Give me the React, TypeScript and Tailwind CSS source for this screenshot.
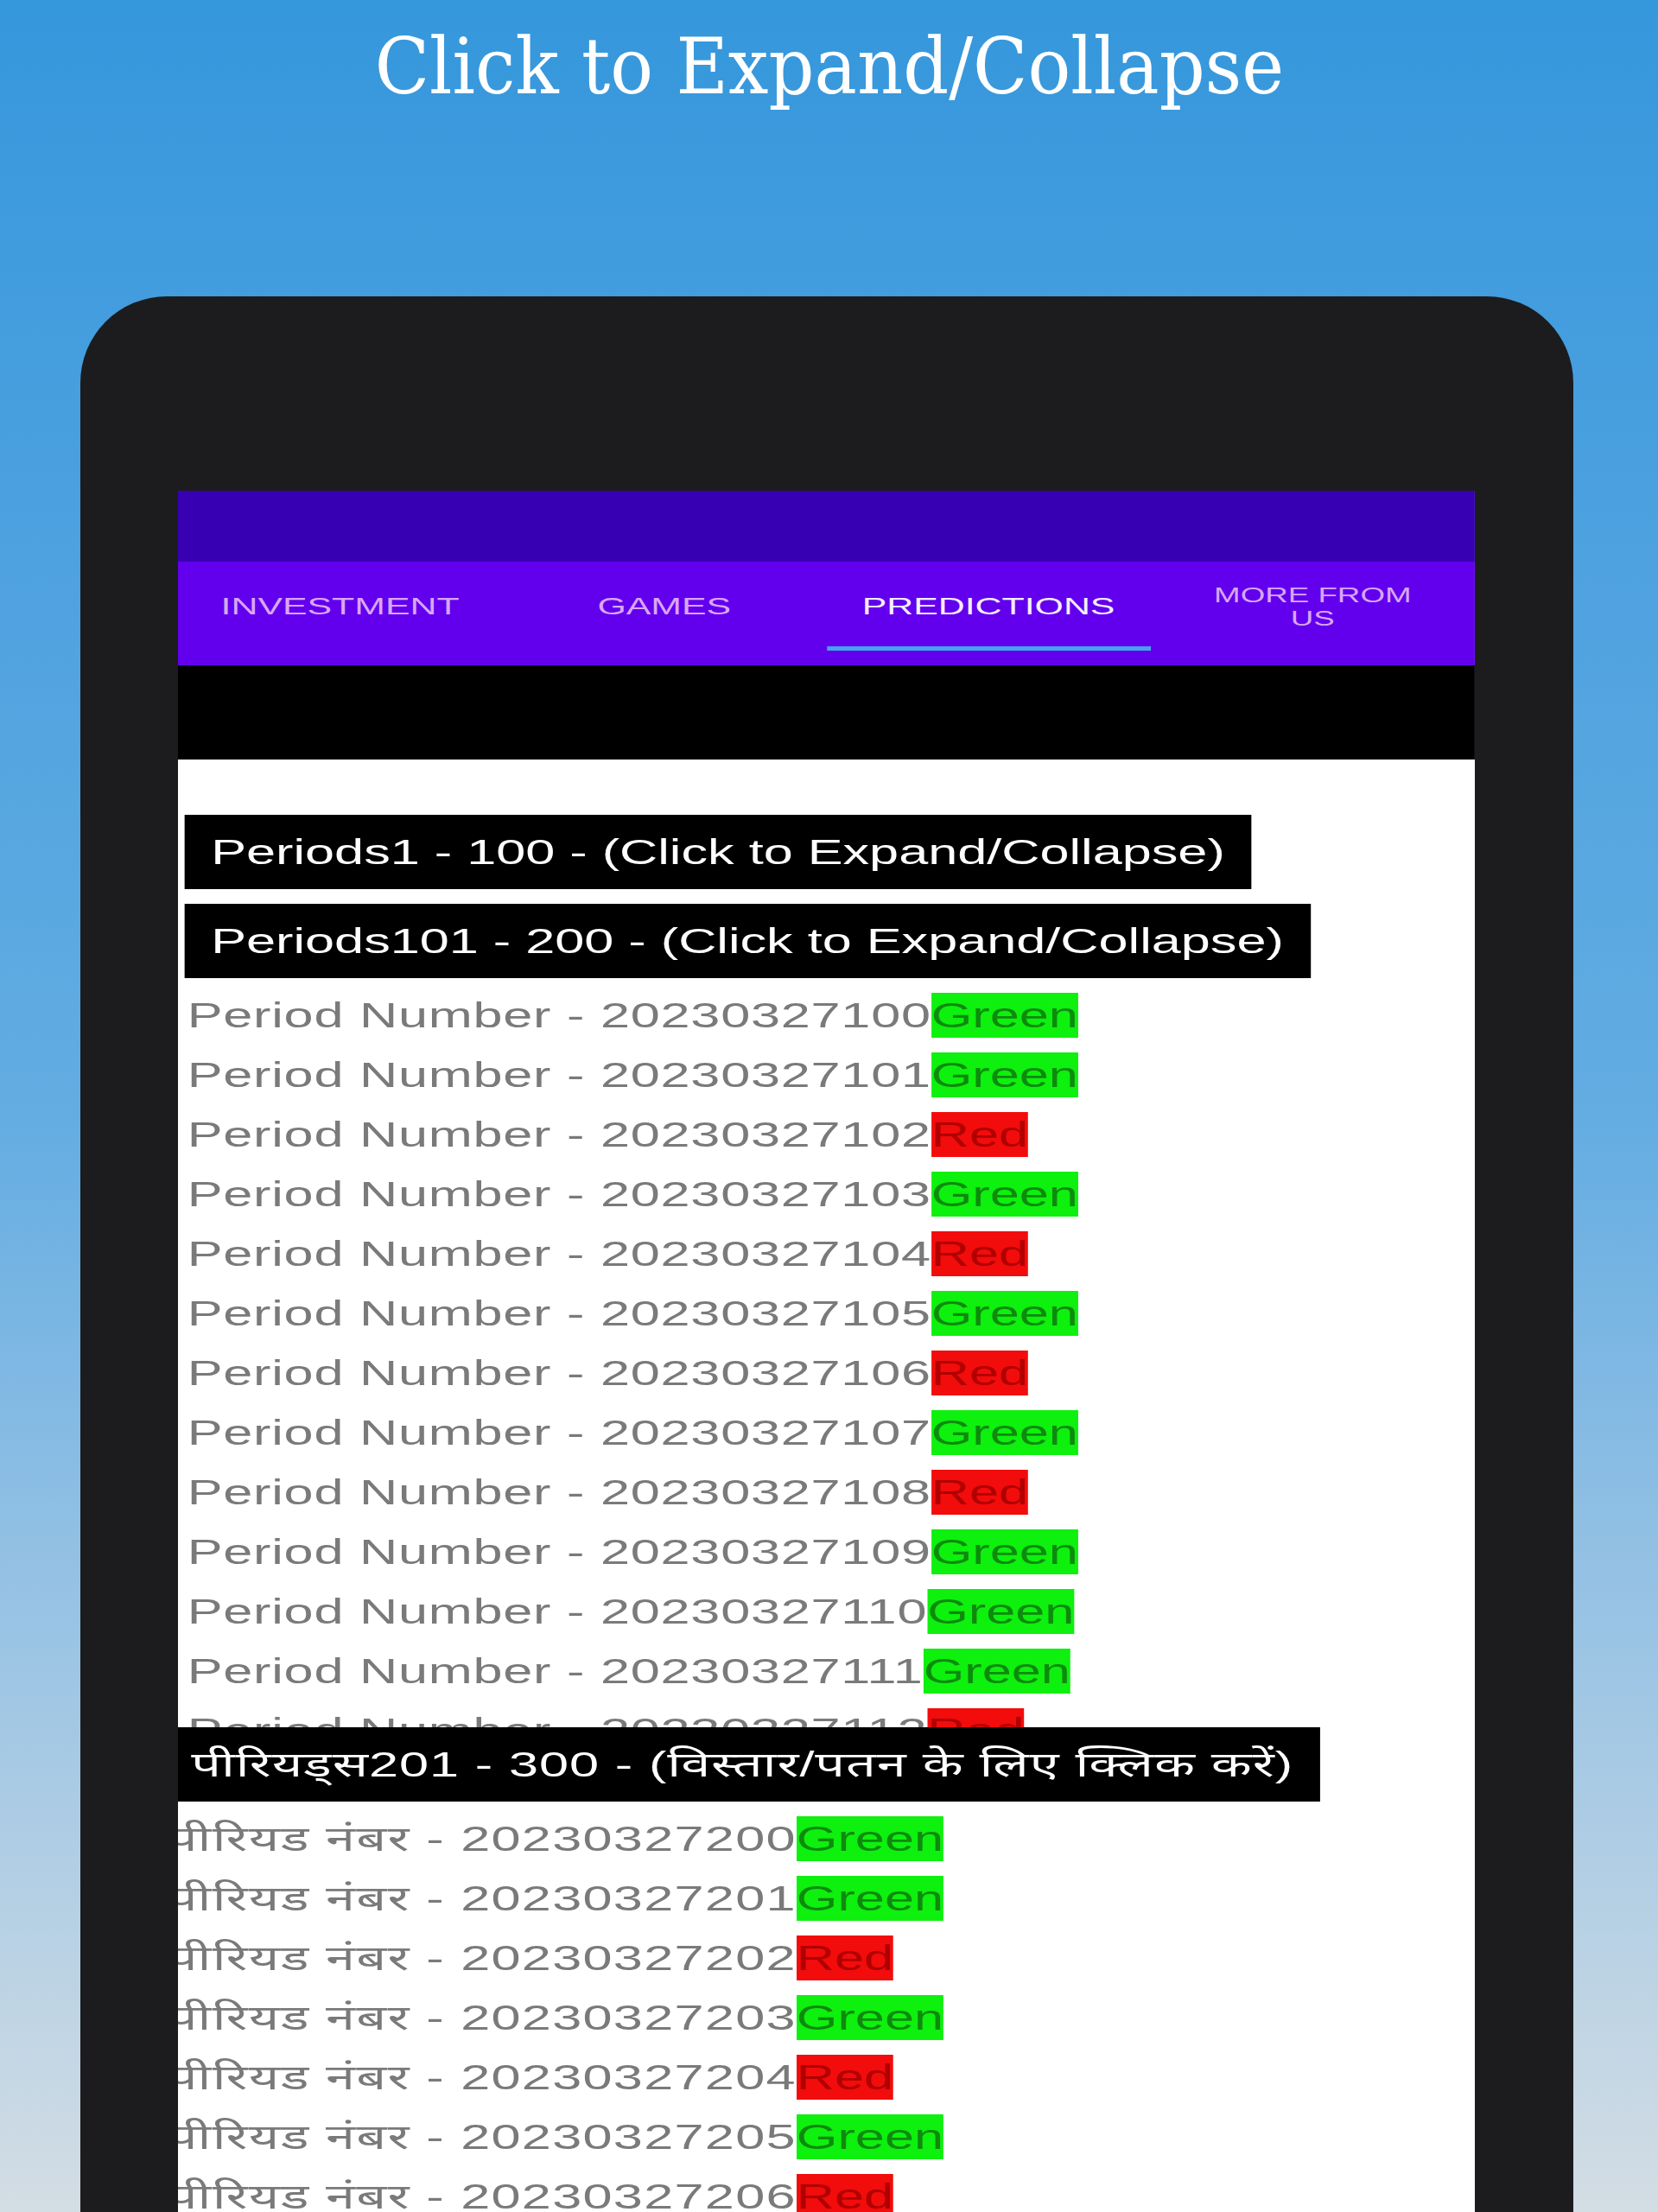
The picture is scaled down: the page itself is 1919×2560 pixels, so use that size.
import React from "react";

type C = "Green" | "Red";

const en: [string, C][] = [
  ["20230327100", "Green"],
  ["20230327101", "Green"],
  ["20230327102", "Red"],
  ["20230327103", "Green"],
  ["20230327104", "Red"],
  ["20230327105", "Green"],
  ["20230327106", "Red"],
  ["20230327107", "Green"],
  ["20230327108", "Red"],
  ["20230327109", "Green"],
  ["20230327110", "Green"],
  ["20230327111", "Green"],
  ["20230327112", "Red"],
];

const hi: [string, C][] = [
  ["20230327200", "Green"],
  ["20230327201", "Green"],
  ["20230327202", "Red"],
  ["20230327203", "Green"],
  ["20230327204", "Red"],
  ["20230327205", "Green"],
  ["20230327206", "Red"],
  ["20230327207", "Green"],
];

function Row({
  label,
  num,
  color,
  hindi,
}: {
  label: string;
  num: string;
  color: C;
  hindi?: boolean;
}) {
  return (
    <div className="mt-[17px] flex h-[52px] whitespace-nowrap text-[40px] leading-[52px]">
      <span
        className={
          hindi
            ? "tracking-[0.85px] text-[#7a7a7a]"
            : "tracking-[0.5px] text-[#7a7a7a]"
        }
      >
        {label} - {num}
      </span>
      <span
        className={
          color === "Green"
            ? "bg-[#0ef00e] text-[#0e8a0e]"
            : "bg-[#f20c0c] text-[#b00000]"
        }
      >
        {color}
      </span>
    </div>
  );
}

function Header({ text, className }: { text: string; className?: string }) {
  return (
    <div
      className={
        "flex h-[86px] w-fit whitespace-nowrap bg-black px-[20px] text-[40px] leading-[86px] text-white " +
        (className ?? "")
      }
    >
      {text}
    </div>
  );
}

export default function App() {
  return (
    <div className="relative h-[2560px] w-[1919px] overflow-hidden bg-gradient-to-b from-[#3597dc] via-[#62ace2] to-[#d3dde4]">
      <div className="h-[343px] pt-[27px] text-center font-['DejaVu_Serif',serif] text-[90px] leading-[100px] text-white">
        <span className="inline-block scale-x-[0.92]">Click to Expand/Collapse</span>
      </div>
      <div className="ml-[93px] h-[2217px] w-[1728px] rounded-t-[100px] bg-[#1c1c1e] pl-[113px] pt-[225px]">
        <div className="h-full w-[1501px] overflow-hidden bg-white font-['Liberation_Sans','Noto_Sans','Noto_Sans_Devanagari','Lohit_Devanagari','FreeSans',sans-serif]">
          <div className="w-[981px] origin-top-left scale-x-[1.53]">
            <div className="h-[82px] bg-[#3700b3]" />
            <div className="h-[120px] bg-[#6200ee]">
              <div className="grid h-[98px] grid-cols-4 items-center pt-[6px] text-center text-[28px] text-[#d9a6f6]">
                <div>INVESTMENT</div>
                <div>GAMES</div>
                <div className="text-[#f7eeff]">PREDICTIONS</div>
                <div className="text-[24px] leading-[27px]">
                  MORE FROM
                  <br />
                  US
                </div>
              </div>
              <div className="grid h-[5px] grid-cols-4">
                <div className="col-start-3 bg-[#45a2f2]" />
              </div>
            </div>
            <div className="h-[109px] bg-black" />
            <div className="pt-[64px]">
              <Header text="Periods1 - 100 - (Click to Expand/Collapse)" className="ml-[5px]" />
              <Header text="Periods101 - 200 - (Click to Expand/Collapse)" className="ml-[5px] mt-[17px]" />
              <div className="ml-[7px]">
                {en.map(([n, c]) => (
                  <Row key={n} label="Period Number" num={n} color={c} />
                ))}
              </div>
              <Header
                text="पीरियड्स201 - 300 - (विस्तार/पतन के लिए क्लिक करें)"
                className="relative z-10 -mt-[30px] -ml-[10px] tracking-[0.6px]"
              />
              <div className="-ml-[8px]">
                {hi.map(([n, c]) => (
                  <Row key={n} label="पीरियड नंबर" num={n} color={c} hindi />
                ))}
              </div>
            </div>
          </div>
        </div>
      </div>
    </div>
  );
}
